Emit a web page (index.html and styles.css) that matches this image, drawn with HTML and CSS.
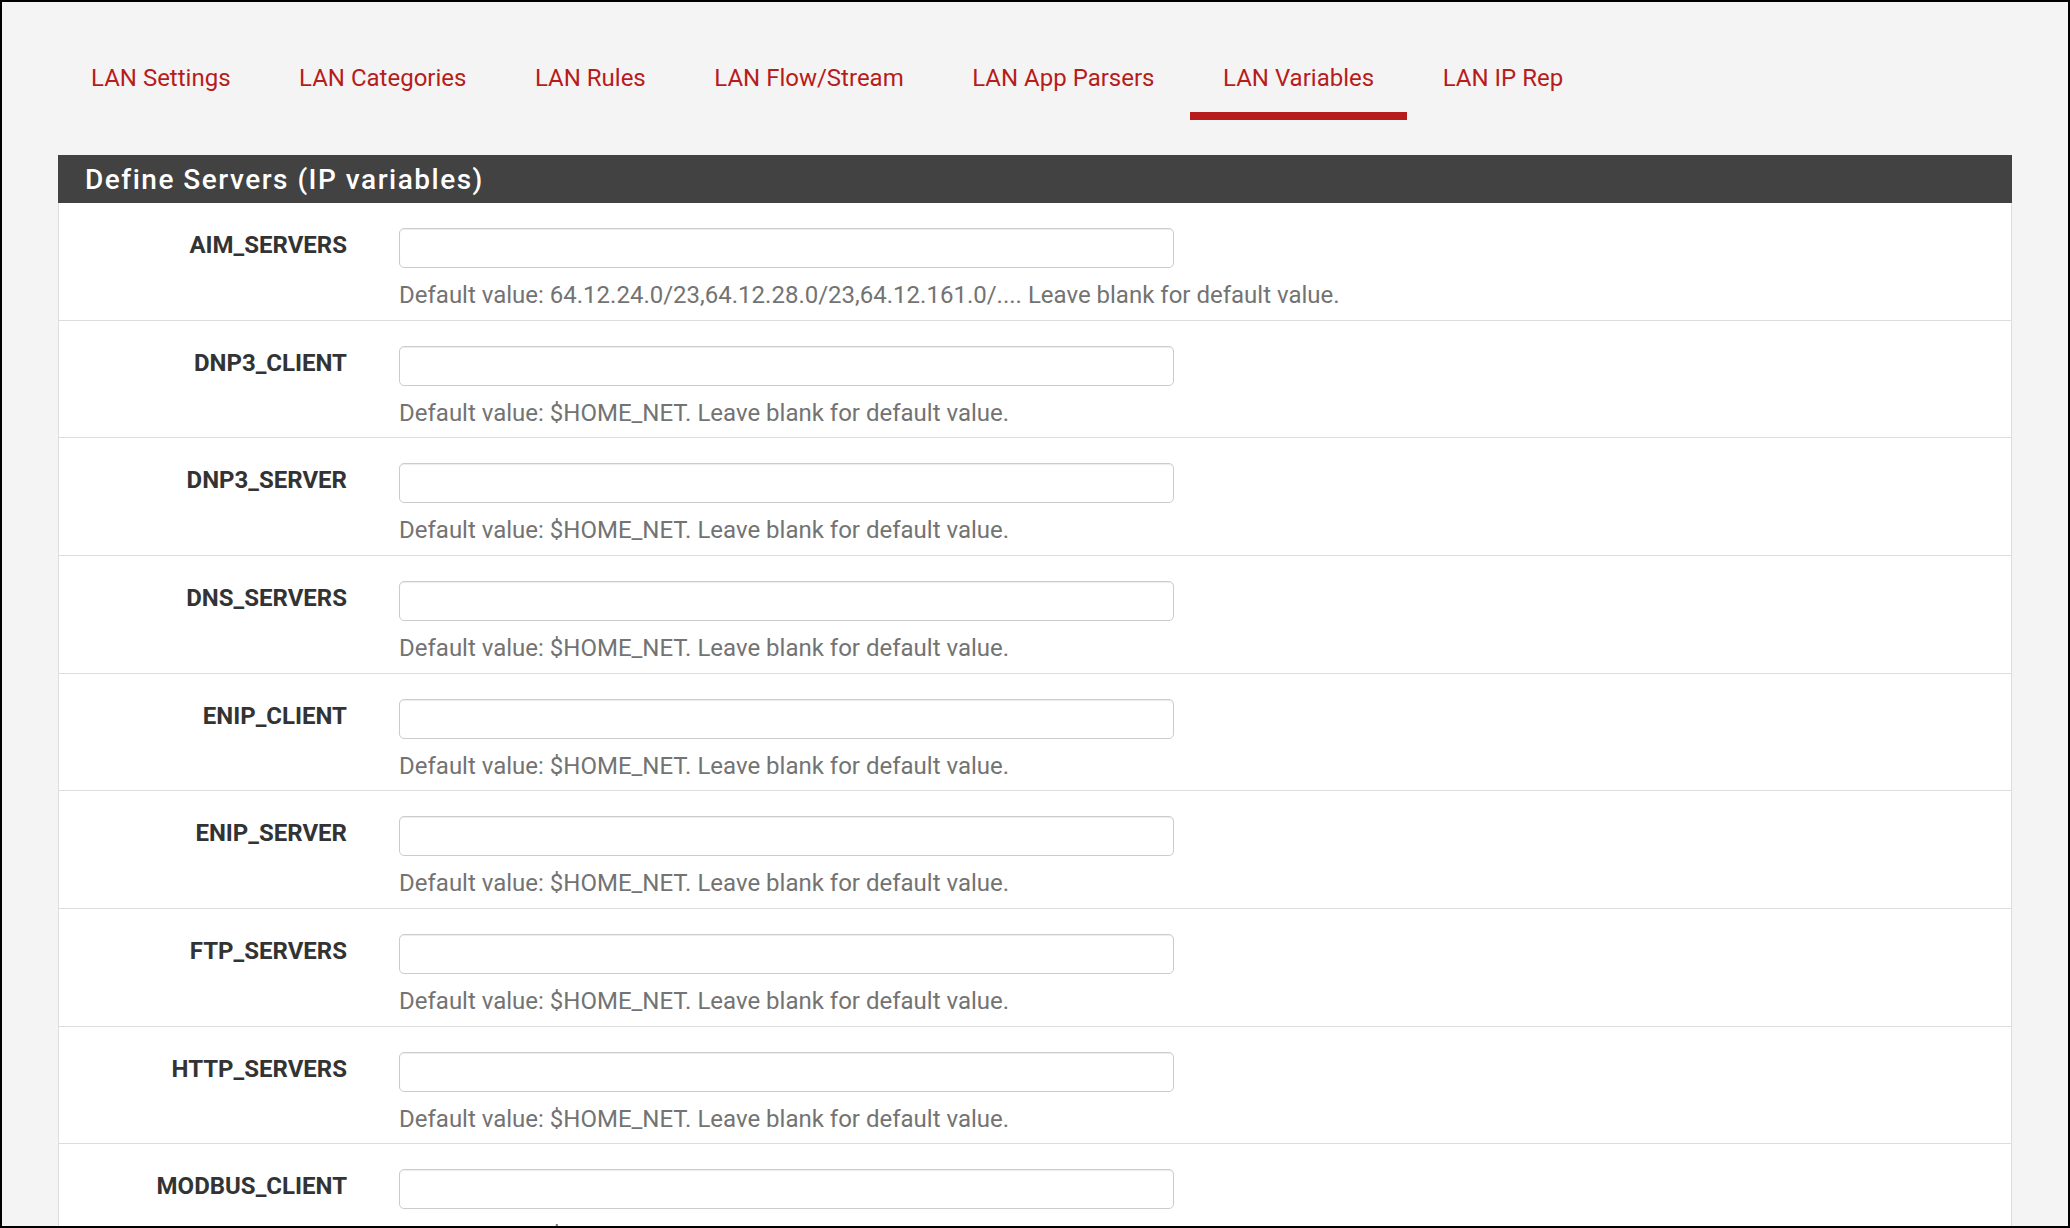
FILE: index.html
```html
<!DOCTYPE html>
<html>
<head>
<meta charset="utf-8">
<link rel="stylesheet" href="styles.css">
</head>
<body>
<div class="frame">
  <ul class="tabs">
    <li class="tab"><a href="#">LAN Settings</a></li>
    <li class="tab"><a href="#">LAN Categories</a></li>
    <li class="tab"><a href="#">LAN Rules</a></li>
    <li class="tab"><a href="#">LAN Flow/Stream</a></li>
    <li class="tab"><a href="#">LAN App Parsers</a></li>
    <li class="tab active"><a href="#">LAN Variables</a></li>
    <li class="tab"><a href="#">LAN IP Rep</a></li>
  </ul>
  <div class="panel">
    <div class="panel-heading">Define Servers (IP variables)</div>
    <div class="panel-body">
      <div class="row"><label class="lbl">AIM_SERVERS</label><div class="field"><input class="inp" type="text"><div class="help">Default value: 64.12.24.0/23,64.12.28.0/23,64.12.161.0/.... Leave blank for default value.</div></div></div>
      <div class="row"><label class="lbl">DNP3_CLIENT</label><div class="field"><input class="inp" type="text"><div class="help">Default value: $HOME_NET. Leave blank for default value.</div></div></div>
      <div class="row"><label class="lbl">DNP3_SERVER</label><div class="field"><input class="inp" type="text"><div class="help">Default value: $HOME_NET. Leave blank for default value.</div></div></div>
      <div class="row"><label class="lbl">DNS_SERVERS</label><div class="field"><input class="inp" type="text"><div class="help">Default value: $HOME_NET. Leave blank for default value.</div></div></div>
      <div class="row"><label class="lbl">ENIP_CLIENT</label><div class="field"><input class="inp" type="text"><div class="help">Default value: $HOME_NET. Leave blank for default value.</div></div></div>
      <div class="row"><label class="lbl">ENIP_SERVER</label><div class="field"><input class="inp" type="text"><div class="help">Default value: $HOME_NET. Leave blank for default value.</div></div></div>
      <div class="row"><label class="lbl">FTP_SERVERS</label><div class="field"><input class="inp" type="text"><div class="help">Default value: $HOME_NET. Leave blank for default value.</div></div></div>
      <div class="row"><label class="lbl">HTTP_SERVERS</label><div class="field"><input class="inp" type="text"><div class="help">Default value: $HOME_NET. Leave blank for default value.</div></div></div>
      <div class="row"><label class="lbl">MODBUS_CLIENT</label><div class="field"><input class="inp" type="text"><div class="help">Default value: $HOME_NET. Leave blank for default value.</div></div></div>
      <div class="row"><label class="lbl">MODBUS_SERVER</label><div class="field"><input class="inp" type="text"><div class="help">Default value: $HOME_NET. Leave blank for default value.</div></div></div>
    </div>
  </div>
</div>
</body>
</html>
```
FILE: styles.css
```css
html, body {
  margin: 0;
  padding: 0;
  height: 100%;
  overflow: hidden;
}
body {
  font-family: Roboto, "Liberation Sans", sans-serif;
}
.frame {
  box-sizing: border-box;
  height: 100vh;
  border: 2px solid #000;
  background: #f4f4f4;
  overflow: hidden;
  padding: 0 56px;
}
.tabs {
  list-style: none;
  margin: 42.6px 0 0 0;
  padding: 0;
  display: flex;
  gap: 2.5px;
}
.tab a {
  display: block;
  padding: 17.7px 33px 16.7px;
  font-size: 24px;
  line-height: 33px;
  color: #b71c1c;
  text-decoration: none;
  border-bottom: 8px solid transparent;
}
.tab.active a {
  border-bottom-color: #b71c1c;
}
.panel {
  margin-top: 35px;
  background: #fff;
  border: 1px solid #ddd;
  border-top: none;
}
.panel-heading {
  background: #424242;
  color: #fff;
  height: 48px;
  box-sizing: border-box;
  padding: 2px 27px 0;
  font-size: 28px;
  font-weight: 500;
  letter-spacing: 1.5px;
  line-height: 46px;
  margin: 0 -1px;
}
.row {
  display: grid;
  grid-template-columns: 288px 775px;
  column-gap: 52px;
  padding: 25px 0 7.7px;
  border-bottom: 1px solid #ddd;
}
.lbl {
  text-align: right;
  font-size: 24px;
  font-weight: 700;
  line-height: 33px;
  padding-top: 1px;
  color: #333;
}
.inp {
  display: block;
  box-sizing: border-box;
  width: 775px;
  height: 40px;
  margin: 0;
  border: 1px solid #ccc;
  border-radius: 5px;
  box-shadow: inset 0 1px 1px rgba(0,0,0,.075);
  background: #fff;
  font-family: Roboto, "Liberation Sans", sans-serif;
  font-size: 24px;
  padding: 0 16px;
}
.help {
  margin-top: 11px;
  font-size: 24px;
  line-height: 33px;
  color: #737373;
  white-space: nowrap;
}
```
